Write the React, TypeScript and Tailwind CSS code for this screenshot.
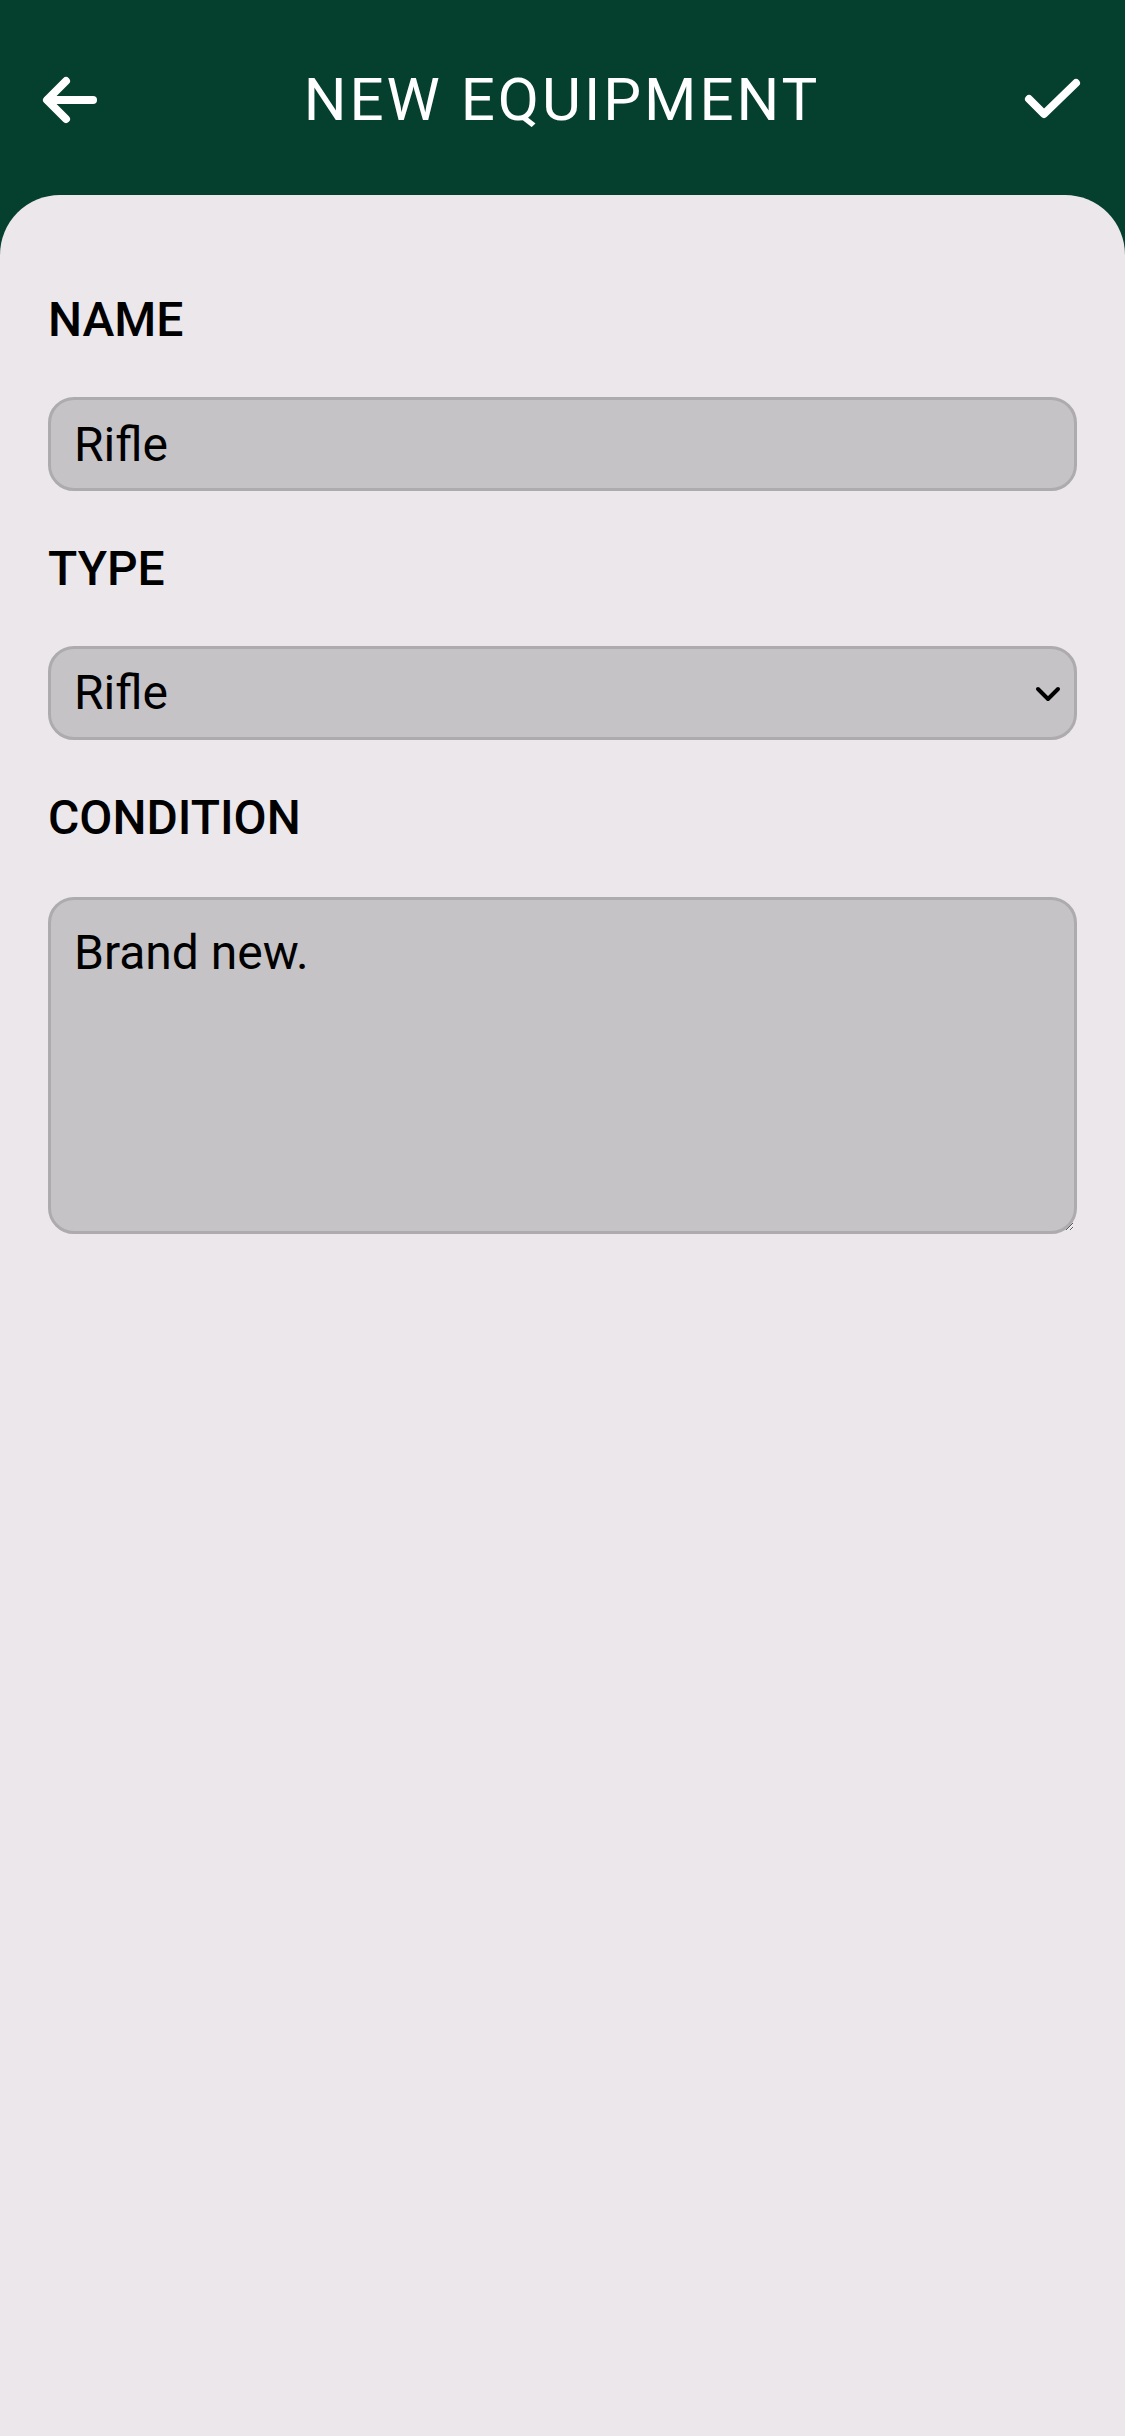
import React, { useState } from 'react';

const fieldClass =
  'block w-full h-[94px] rounded-[26px] border-[3px] border-[#adabae] bg-[#c5c3c6] px-[23px] text-[48px] leading-[56px] text-black outline-none';

function Label({ children, first, last }: { children: React.ReactNode; first?: boolean; last?: boolean }) {
  return (
    <div
      className={`${first ? '' : 'mt-[50px]'} ${last ? 'mb-[51px]' : 'mb-[49px]'} text-[48px] leading-[56px] font-medium text-black`}
    >
      {children}
    </div>
  );
}

export default function App() {
  const [name, setName] = useState('Rifle');
  const [type, setType] = useState('Rifle');
  const [condition, setCondition] = useState('Brand new.');

  return (
    <div className="flex min-h-screen flex-col bg-[#053f2e] font-['Roboto',sans-serif]">
      <header className="grid h-[195px] grid-cols-[1fr_auto_1fr] items-center pl-[41px] pr-[42px] pt-[4px]">
        <button className="justify-self-start" aria-label="Back">
          <svg width="56" height="48" viewBox="0 0 56 48" fill="none" stroke="white" strokeWidth="8" strokeLinecap="round" strokeLinejoin="round">
            <path d="M25 5 6 24l19 19" />
            <path d="M7 24h45" />
          </svg>
        </button>
        <h1 className="text-[60px] leading-none font-normal tracking-[3px] text-white">NEW EQUIPMENT</h1>
        <button className="justify-self-end" aria-label="Save">
          <svg width="60" height="44" viewBox="0 0 60 44" fill="none" stroke="white" strokeWidth="8" strokeLinecap="round" strokeLinejoin="round">
            <path d="M6 21l15 15L53 5" />
          </svg>
        </button>
      </header>

      <main className="flex-1 rounded-t-[60px] bg-[#ebe7eb] px-[48px] pt-[97px] pb-[40px]">
        <Label first>NAME</Label>
        <input
          className={fieldClass}
          value={name}
          onChange={(e) => setName(e.target.value)}
        />

        <Label>TYPE</Label>
        <div className="relative">
          <select
            className={`${fieldClass} appearance-none`}
            value={type}
            onChange={(e) => setType(e.target.value)}
          >
            <option>Rifle</option>
            <option>Pistol</option>
            <option>Shotgun</option>
            <option>Optic</option>
          </select>
          <svg
            className="pointer-events-none absolute right-[16px] top-[40px]"
            width="26"
            height="16"
            viewBox="0 0 26 16"
            fill="none"
            stroke="black"
            strokeWidth="4"
            strokeLinecap="round"
            strokeLinejoin="round"
          >
            <path d="M3 3l10 10 10-10" />
          </svg>
        </div>

        <Label last>CONDITION</Label>
        <textarea
          className="block h-[337px] w-full rounded-[26px] border-[3px] border-[#adabae] bg-[#c5c3c6] px-[23px] pt-[25px] pb-[20px] text-[48px] leading-[56px] text-black outline-none"
          value={condition}
          onChange={(e) => setCondition(e.target.value)}
        />
      </main>
    </div>
  );
}
